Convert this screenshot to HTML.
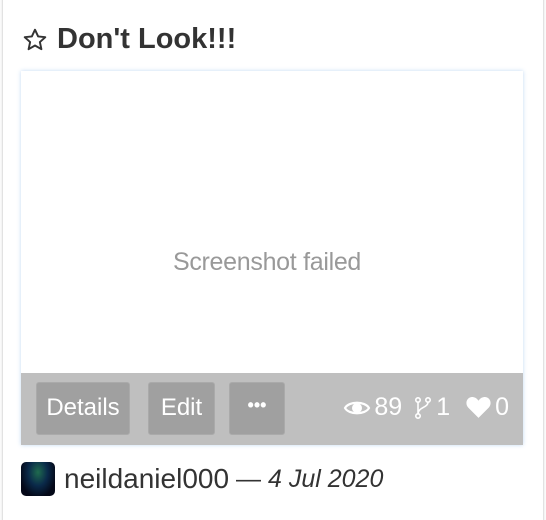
<!DOCTYPE html>
<html><head><meta charset="utf-8"><style>
*{margin:0;padding:0;box-sizing:border-box}
html,body{width:546px;height:520px;overflow:hidden}
body{background:#fff;font-family:"Liberation Sans",sans-serif;position:relative}
.card{position:absolute;left:2px;top:-4px;width:542px;height:530px;border:1px solid #e2e2e2;border-radius:4px;box-shadow:0 0 3px rgba(0,0,0,.12)}
.title{position:absolute;left:22px;top:23px;font-size:29px;font-weight:bold;color:#333;display:flex;align-items:center}
.prev{position:absolute;left:21px;top:71px;width:502px;height:374px;background:#fff;box-shadow:0 0 4px rgba(120,170,230,.45)}
.fail{position:absolute;left:0;right:10px;top:177px;text-align:center;font-size:25px;color:#999;letter-spacing:-0.3px}
.bar{position:absolute;left:0;top:302px;width:502px;height:72px;background:#bfbfbf}
.btn{position:absolute;top:9px;height:53px;background:#a0a0a0;border-radius:3px;border:1px solid #aaa;color:#fff;font-size:24px;line-height:49px;text-align:center}
.stats{position:absolute;right:14px;top:20px;color:#fff;font-size:25px;display:flex;align-items:center;gap:3px}
.user{position:absolute;left:21px;top:462px;display:flex;align-items:center}
.av{width:34px;height:34px;border-radius:5px;background:radial-gradient(ellipse at 50% 30%,#1f6b4e 0,#0a2a4a 40%,#040818 75%);overflow:hidden}
</style></head><body>
<div class="card"></div>
<div class="title"><svg width="26" height="26" viewBox="0 0 24 24" style="margin-right:9px"><path d="M12 2.5l2.9 6.2 6.6.7-5 4.5 1.4 6.6L12 17.1l-5.9 3.4 1.4-6.6-5-4.5 6.6-.7z" fill="none" stroke="#333" stroke-width="1.8" stroke-linejoin="round"/></svg>Don't Look!!!</div>
<div class="prev">
<div class="fail">Screenshot failed</div>
<div class="bar">
<div class="btn" style="left:15px;width:94px">Details</div>
<div class="btn" style="left:127px;width:67px">Edit</div>
<div class="btn" style="left:208px;width:56px;line-height:44px;font-weight:bold;font-size:18px">•••</div>
<div class="stats">
<svg width="28" height="20" viewBox="0 0 28 20"><path d="M2 10C6 3 22 3 26 10C22 17 6 17 2 10Z" fill="none" stroke="#fff" stroke-width="2.2"/><circle cx="14" cy="10" r="5" fill="#fff"/></svg><span>89</span>
<svg width="20" height="26" viewBox="0 0 20 24" style="margin-left:8px"><circle cx="5" cy="4" r="2.2" fill="none" stroke="#fff" stroke-width="1.6"/><circle cx="5" cy="20" r="2.2" fill="none" stroke="#fff" stroke-width="1.6"/><circle cx="15" cy="4" r="2.2" fill="none" stroke="#fff" stroke-width="1.6"/><path d="M5 6v12M15 6c0 6-10 5-10 12" fill="none" stroke="#fff" stroke-width="1.6"/></svg><span>1</span>
<svg width="27" height="23" viewBox="0 0 26 22" style="margin-left:12px"><path d="M13 21L3 11C-1 6 3 0 8 1c2.5.4 4 2 5 3.5C14 3 15.5 1.4 18 1c5-1 9 5 5 10z" fill="#fff"/></svg><span>0</span>
</div>
</div>
</div>
<div class="user"><div class="av"></div><span style="margin-left:9px;font-size:28px;color:#333">neildaniel000</span><span style="margin-left:7px;font-size:25px;color:#333"> — <i>4 Jul 2020</i></span></div>
</body></html>
